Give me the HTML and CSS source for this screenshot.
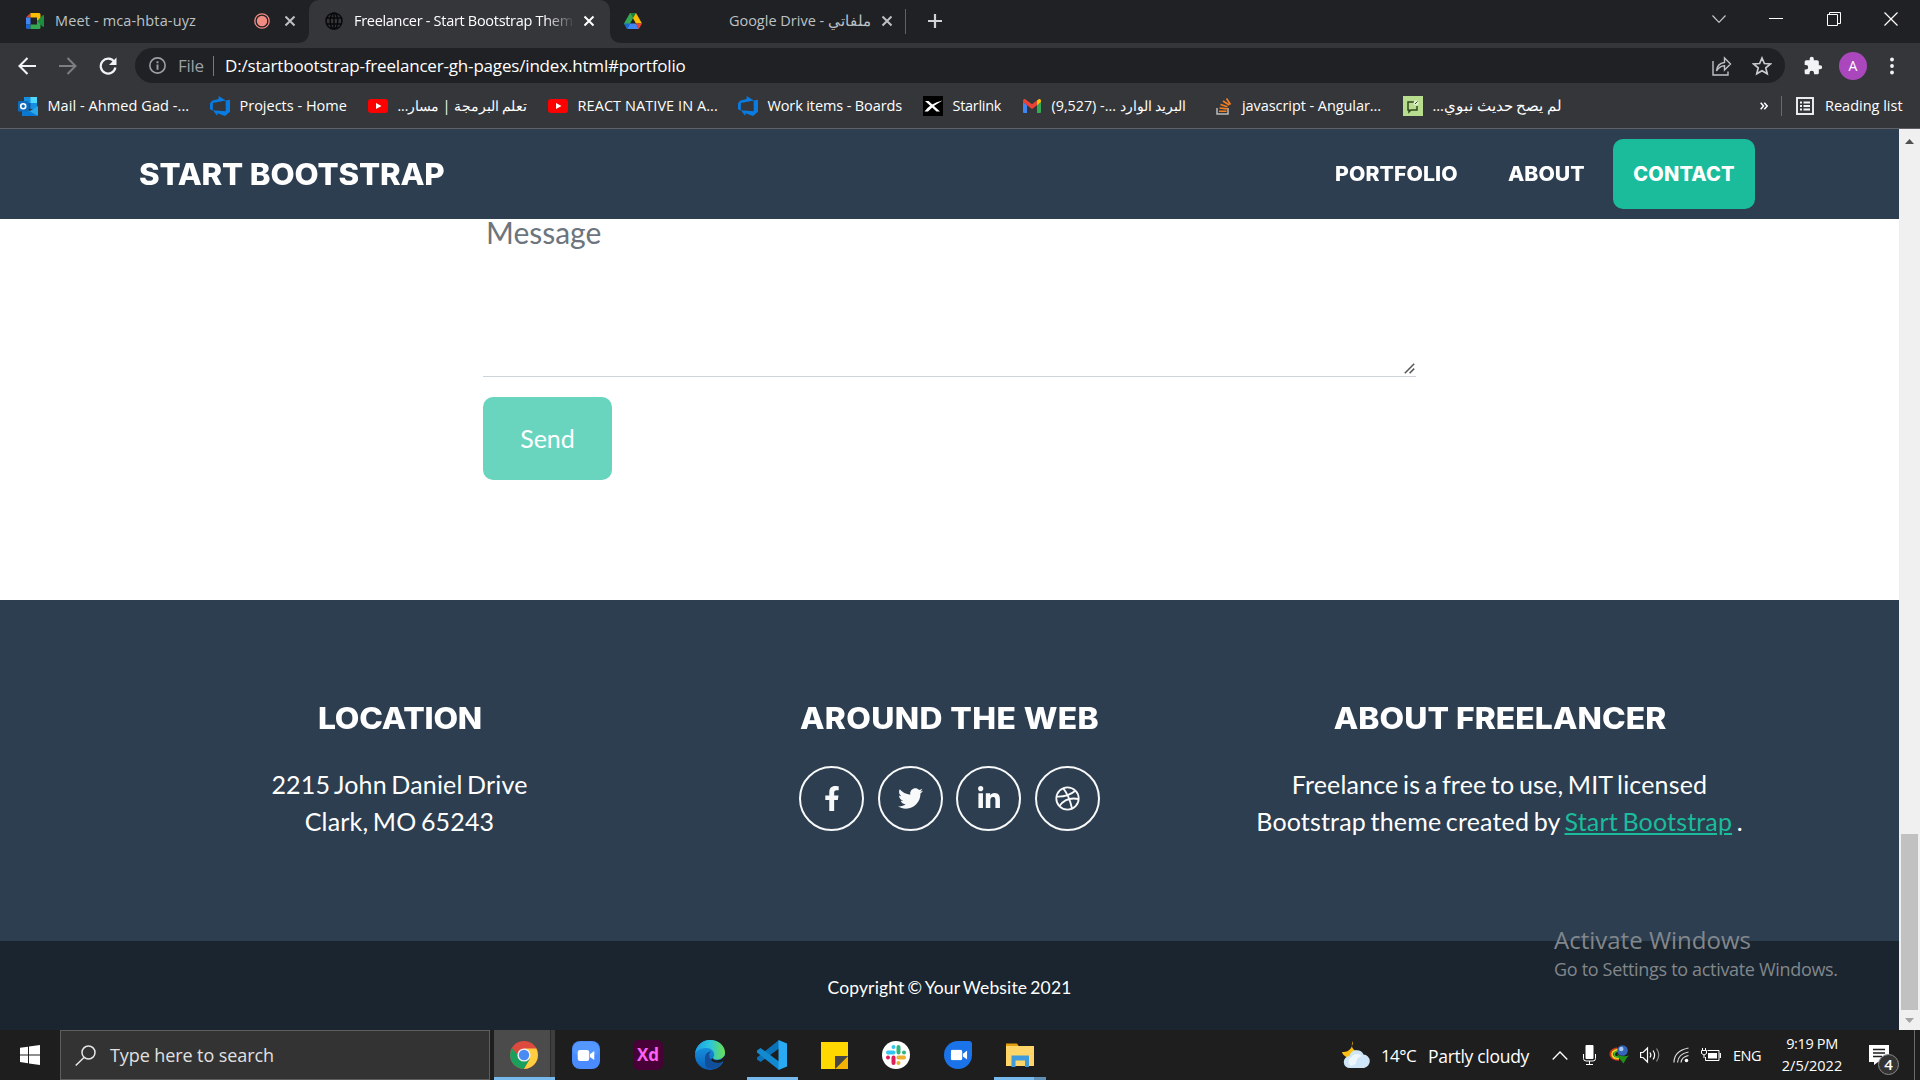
FILE: index.html
```html
<!DOCTYPE html>
<html lang="en">
<head>
<meta charset="utf-8">
<title>Freelancer - Start Bootstrap Theme</title>
<link rel="stylesheet" href="styles.css">
</head>
<body>
<svg width="0" height="0" class="defs">
  <symbol id="close" viewBox="0 0 12 12"><path d="M1.5 1.5l9 9M10.500 1.500l-9 9" stroke="currentColor" stroke-width="2" fill="none"/></symbol>
  <symbol id="youtube" viewBox="0 0 20 20"><rect y="3" width="20" height="14" rx="3" fill="#f00"/><path d="M8 7l5.500 3L8 13z" fill="#fff"/></symbol>
  <symbol id="devops" viewBox="0 0 20 20"><path d="M20 3.700v12l-5 4.300-7.700-2.800V20l-4.400-5.700L15.700 15.300V4.400zM15.800 4.500L8.600 0v2.900L2 4.800 0 7.400v5.800l2.900 1.200V7.100z" fill="#0a7be0"/></symbol>
  <symbol id="camera" viewBox="0 0 18 12"><rect width="12.500" height="12" rx="2.500" fill="#fff"/><path d="M13.300 4.500L18 1v10l-4.700-3.500z" fill="#fff"/></symbol>
</svg>

<header class="browser">
  <div class="tabstrip">
    <div class="tab tab-meet">
      <svg class="favicon" viewBox="0 0 18 16"><path d="M0 4.500L4.500 0v4.500z" fill="#ea4335"/><path d="M4.500 0h8.500q1.500 0 1.500 1.500V6l-3.500 2.500v-4H4.500z" fill="#fbbc04"/><path d="M0 4.500h4.500v7H0z" fill="#4285f4"/><path d="M0 11.500h4.500V16h-3Q0 16 0 14.500z" fill="#1967d2"/><path d="M4.500 11.500H11v-3L14.500 6v8.500q0 1.500-1.500 1.500H4.500z" fill="#34a853"/><path d="M11 8l5.500-5.500Q18 1.500 18 3v10q0 1.500-1.500.5z" fill="#1e8e3e"/></svg>
      <span class="tab-title t-meet">Meet - mca-hbta-uyz</span>
      <svg class="record" viewBox="0 0 16 16"><circle cx="8" cy="8" r="7.200" fill="none" stroke="#f28b82" stroke-width="1.300"/><circle cx="8" cy="8" r="5.200" fill="#f28b82"/></svg>
      <svg class="x"><use href="#close"/></svg>
    </div>
    <div class="tab tab-active">
      <svg class="foot foot-left" viewBox="0 0 12 12"><path d="M12 0v12H0Q12 12 12 0z" fill="#35363a"/></svg>
      <svg class="favicon" viewBox="0 0 18 18" fill="none" stroke="#08090a" stroke-width="1.500"><circle cx="9" cy="9" r="8"/><ellipse cx="9" cy="9" rx="3.800" ry="8"/><path d="M9 1v16M1.500 6h15M1.500 12h15"/></svg>
      <span class="tab-title t-free">Freelancer - Start Bootstrap Them</span>
      <svg class="x"><use href="#close"/></svg>
      <svg class="foot foot-right" viewBox="0 0 12 12"><path d="M0 0v12h12Q0 12 0 0z" fill="#35363a"/></svg>
    </div>
    <div class="tab tab-drive">
      <svg class="favicon" viewBox="0 0 18 16"><path d="M6 0h6l-3 5.300L3.200 16 0 10.500z" fill="#34a853"/><path d="M6 0h6l6 10.500h-6z" fill="#fbbc04"/><path d="M6 0h6L9 5.300z" fill="#188038"/><path d="M6 10.500h6L14.800 16H3.200z" fill="#4285f4"/><path d="M0 10.500h6L3.200 16z" fill="#1967d2"/><path d="M12 10.500h6L14.800 16z" fill="#ea4335"/></svg>
      <span class="tab-title t-drive">Google Drive - <bdi>ملفاتي</bdi></span>
      <svg class="x"><use href="#close"/></svg>
    </div>
    <svg class="newtab" viewBox="0 0 16 16"><path d="M8 1v14M1 8h14" stroke="#d0d2d6" stroke-width="2.200"/></svg>
    <div class="winctl">
      <svg width="14" height="8" viewBox="0 0 14 8"><path d="M.5.500L7 7.300 13.500.5" fill="none" stroke="#c8c8c8" stroke-width="1.200"/></svg>
      <svg width="14" height="2" viewBox="0 0 14 2"><path d="M0 .5h14" stroke="#fff"/></svg>
      <svg width="14" height="14" viewBox="0 0 14 14" fill="none" stroke="#fff"><path d="M.5 2.500h10v11H.5zM2.500 2.500v-2h11v11h-3"/></svg>
      <svg width="14" height="14" viewBox="0 0 14 14"><path d="M.5.500l13 13M13.500.500l-13 13" stroke="#fff" stroke-width="1.200"/></svg>
    </div>
  </div>

  <div class="toolbar">
    <svg class="back" viewBox="0 0 18 18" fill="none" stroke="#f1f3f4" stroke-width="2.100"><path d="M18 9H2M9.500 1L1.500 9l8 8"/></svg>
    <svg class="forward" viewBox="0 0 18 18" fill="none" stroke="#7c7e82" stroke-width="2"><path d="M0 9h16M8.500 1l8 8-8 8"/></svg>
    <svg class="reload" viewBox="0 0 18 18"><path d="M15.300 5A7.400 7.400 0 1 0 16.400 10.500" fill="none" stroke="#f1f3f4" stroke-width="2.200"/><path d="M17.500.5v7.500H10z" fill="#f1f3f4"/></svg>
    <div class="omnibox">
      <svg class="info" viewBox="0 0 16 16"><circle cx="8" cy="8" r="7.200" fill="none" stroke="#9aa0a6" stroke-width="1.500"/><path d="M8 7v5M8 4v1.800" stroke="#9aa0a6" stroke-width="1.800"/></svg>
      <span class="scheme">File</span>
      <span class="url">D:/startbootstrap-freelancer-gh-pages/index.html#portfolio</span>
      <svg class="share" viewBox="0 0 20 20" fill="none" stroke="#bdc1c6" stroke-width="1.400"><path d="M1 5v14h15v-3.500"/><path d="M4.500 15Q5 7.500 12.500 6.500V2l6 6-6 6V9.800Q7.500 10 4.500 15z"/></svg>
      <svg class="star" viewBox="0 0 20 20"><path d="M10 2l2.400 5.500 6 .5-4.600 3.900 1.400 5.900L10 14.700l-5.200 3.100 1.400-5.900L1.600 8l6-.5z" fill="none" stroke="#c8cbd0" stroke-width="1.700"/></svg>
    </div>
    <svg class="puzzle" viewBox="0 0 24 24"><path fill="#f1f3f4" d="M20.500 11H19V7c0-1.100-.9-2-2-2h-4V3.500a2.500 2.500 0 0 0-5 0V5H4c-1.100 0-2 .9-2 2v3.800h1.500a2.700 2.700 0 0 1 0 5.400H2V20c0 1.100.9 2 2 2h3.800v-1.500a2.700 2.700 0 0 1 5.400 0V22H17c1.100 0 2-.9 2-2v-4h1.500a2.500 2.500 0 0 0 0-5z"/></svg>
    <span class="avatar">A</span>
    <svg class="dots" viewBox="0 0 4 18" fill="#f1f3f4"><circle cx="2" cy="2.500" r="1.900"/><circle cx="2" cy="9" r="1.900"/><circle cx="2" cy="15.500" r="1.900"/></svg>
  </div>

  <div class="bookmarks">
    <div class="bm"><svg viewBox="0 0 20 20"><path d="M6 1h13v12H6z" fill="#1490df"/><path d="M12.500 1H19v6h-6.500z" fill="#50d9ff"/><path d="M6 7h6.500v6H6z" fill="#0f5aa8"/><path d="M4 11l8 4 8-5v8.500q0 1.500-1.500 1.500h-13Q4 20 4 18.500z" fill="#28a8ea"/><path d="M4 11l16 9H5.500Q4 20 4 18.500z" fill="#0a78d0"/><rect y="5" width="10.500" height="10.500" rx="1" fill="#0f6cbd"/><circle cx="5.200" cy="10.200" r="2.500" fill="none" stroke="#fff" stroke-width="1.600"/></svg><span class="n-p1">Mail - Ahmed Gad -...</span></div>
    <div class="bm"><svg><use href="#devops"/></svg><span>Projects - Home</span></div>
    <div class="bm"><svg><use href="#youtube"/></svg><span dir="rtl" class="n-4">تعلم البرمجة | مسار...</span></div>
    <div class="bm"><svg><use href="#youtube"/></svg><span class="n-p1">REACT NATIVE IN A...</span></div>
    <div class="bm"><svg><use href="#devops"/></svg><span class="n-2">Work items - Boards</span></div>
    <div class="bm"><svg viewBox="0 0 20 20"><rect width="20" height="20" fill="#000"/><path d="M2 5h3.500L17 15.500h-3.500z" fill="#fff"/><path d="M1.500 15.500Q7 7.500 19.500 4.500 11 9 5 15.500z" fill="#fff"/></svg><span class="n-3">Starlink</span></div>
    <div class="bm"><svg viewBox="0 0 20 20"><path d="M1 6l4 3v8H2q-1 0-1-1z" fill="#4285f4"/><path d="M15 9l4-3v10q0 1-1 1h-3z" fill="#34a853"/><path d="M15 4.500L17 3q2-.5 2 2v1l-4 3.200z" fill="#fbbc04"/><path d="M1 6V5q0-2.500 2-2l7 5.200 5-3.700v4.700l-5 3.900z" fill="#ea4335"/></svg><span class="n-5">(9,527) -... <bdi>البريد الوارد</bdi></span></div>
    <div class="bm bm-so"><svg viewBox="0 0 20 20"><path d="M2 12v6h11v-6" fill="none" stroke="#bcbbbb" stroke-width="1.500"/><path d="M4 15.300h7.500M4.500 12l7.400.9M5.500 8.500l7 2.300M8 5l6.200 4M11.500 2.500l4 6" stroke="#f48024" stroke-width="1.600"/></svg><span class="n-1">javascript - Angular...</span></div>
    <div class="bm"><svg viewBox="0 0 20 20"><rect width="20" height="20" fill="#b9dd8e"/><path d="M11 6H5v8h1v2l2-2h6v-4" fill="none" stroke="#2f4a1c" stroke-width="1.500"/><circle cx="13" cy="7" r="2.500" fill="#fff" opacity=".6"/><path d="M12 8l2.500-2.500" stroke="#2f4a1c"/></svg><span dir="rtl">لم يصح حديث نبوي...</span></div>
    <svg class="more" viewBox="0 0 8 8" fill="none" stroke="#fff" stroke-width="1.500"><path d="M.7.700L3.500 4 .7 7.300M4.300.700L7.200 4 4.300 7.300"/></svg>
    <div class="reading"><svg viewBox="0 0 18 20"><rect x="1" y="2" width="16" height="16" fill="none" stroke="#f1f3f4" stroke-width="1.900"/><path d="M4 6.500h2M7.500 6.500H14M4 10h2M7.500 10H14M4 13.500h2M7.500 13.500H14" stroke="#f1f3f4" stroke-width="1.900"/></svg><span>Reading list</span></div>
  </div>
</header>

<div class="viewport">
  <main class="page">
    <nav class="navbar">
      <a class="brand"><span class="wide">START BOOTSTRAP</span></a>
      <div class="links">
        <a class="link-portfolio"><span class="wide">PORTFOLIO</span></a>
        <a class="link-about"><span class="wide">ABOUT</span></a>
        <a class="link-contact"><span>CONTACT</span></a>
      </div>
    </nav>
    <section class="contact">
      <div class="message">
        <span>Message</span>
        <svg width="11" height="11" viewBox="0 0 11 11"><path d="M.8 10.200l9.400-9.400M5.600 10.200l4.600-4.600" stroke="#555" stroke-width="1.500"/></svg>
      </div>
      <button class="send">Send</button>
    </section>
    <footer class="footer">
      <div class="col">
        <h4><span class="h-loc">LOCATION</span></h4>
        <p><span class="l-addr">2215 John Daniel Drive</span><br><span class="l-addr">Clark, MO 65243</span></p>
      </div>
      <div class="col">
        <h4><span class="h-web">AROUND THE WEB</span></h4>
        <div class="social">
          <a><svg width="16" height="25" viewBox="0 0 320 512"><path d="M279.140 288l14.220-92.660h-88.910v-60.130c0-25.350 12.420-50.060 52.240-50.060h40.420V6.260S260.430 0 225.360 0c-73.220 0-121.080 44.380-121.080 124.720v70.620H22.890V288h81.390v224h100.170V288z"/></svg></a>
          <a><svg width="25" height="25" viewBox="0 0 512 512"><path d="M459.370 151.716c.325 4.548.325 9.097.325 13.645 0 138.720-105.583 298.558-298.558 298.558-59.452 0-114.680-17.219-161.137-47.106 8.447.974 16.568 1.299 25.340 1.299 49.055 0 94.213-16.568 130.274-44.832-46.132-.975-84.792-31.188-98.112-72.772 6.498.974 12.995 1.624 19.818 1.624 9.421 0 18.843-1.300 27.614-3.573-48.081-9.747-84.143-51.980-84.143-102.985v-1.299c13.969 7.797 30.214 12.670 47.431 13.319-28.264-18.843-46.781-51.005-46.781-87.391 0-19.492 5.197-37.360 14.294-52.954 51.655 63.675 129.300 105.258 216.365 109.807-1.624-7.797-2.599-15.918-2.599-24.040 0-57.828 46.782-104.934 104.934-104.934 30.213 0 57.502 12.670 76.670 33.137 23.715-4.548 46.456-13.320 66.599-25.340-7.798 24.366-24.366 44.833-46.132 57.827 21.117-2.273 41.584-8.122 60.426-16.243-14.292 20.791-32.161 39.308-52.628 54.253z"/></svg></a>
          <a><svg width="22" height="25" viewBox="0 0 448 512"><path d="M100.280 448H7.400V148.900h92.880zM53.790 108.100C24.090 108.100 0 83.500 0 53.800a53.790 53.790 0 0 1 107.580 0c0 29.700-24.100 54.300-53.790 54.300zM447.900 448h-92.680V302.400c0-34.700-.7-79.200-48.290-79.200-48.290 0-55.690 37.700-55.690 76.700V448h-92.780V148.900h89.080v40.800h1.300c12.400-23.500 42.690-48.300 87.880-48.300 94 0 111.280 61.900 111.280 142.300V448z"/></svg></a>
          <a><svg width="25" height="25" viewBox="0 0 25 25" class="line"><circle cx="12.500" cy="12.500" r="11.200"/><path d="M8 2.200Q14 9 17 22.500M1.500 10.500Q13 11 20.300 4.700M4.500 20Q11 10.500 23.500 13"/></svg></a>
        </div>
      </div>
      <div class="col">
        <h4><span class="h-free">ABOUT FREELANCER</span></h4>
        <p><span class="l-free">Freelance is a free to use, MIT licensed</span><br><span class="l-addr">Bootstrap theme created by <a class="link">Start Bootstrap</a> .</span></p>
      </div>
    </footer>
    <div class="copyright">Copyright © Your Website 2021</div>
    <div class="activate"><div class="act1">Activate Windows</div><div class="act2">Go to Settings to activate Windows.</div></div>
  </main>
  <div class="scrollbar">
    <svg width="9" height="5" viewBox="0 0 9 5"><path d="M0 5l4.500-5L9 5z" fill="#505050"/></svg>
    <div class="thumb"></div>
    <svg width="9" height="5" viewBox="0 0 9 5"><path d="M0 0l4.500 5L9 0z" fill="#a3a3a3"/></svg>
  </div>
</div>

<div class="taskbar">
  <div class="start"><svg width="20" height="20" viewBox="0 0 20 20" fill="#fff"><path d="M0 2.800L8 1.700v7.700H0zM9 1.500L20 0v9.400H9zM0 10.400h8v7.800l-8-1.100zM9 10.400h11V20L9 18.400z"/></svg></div>
  <div class="search"><svg width="21" height="21" viewBox="0 0 21 21" fill="none" stroke="#e6e6e6" stroke-width="1.500"><circle cx="13.500" cy="7.500" r="6.500"/><path d="M9 12.500L.7 20.500"/></svg><span>Type here to search</span></div>
  <div class="apps">
    <div class="app running current"><svg width="28" height="28" viewBox="0 0 28 28"><circle cx="14" cy="14" r="14" fill="#dd4b3e"/><path d="M1.900 7A14 14 0 0 0 14 28l6.100-10.500L14 14H7.900z" fill="#1a9f5c"/><path d="M26.100 7A14 14 0 0 1 14 28l6.100-10.500L14 7z" fill="#ffcd40"/><path d="M14 7h12.100" stroke="#dd4b3e"/><circle cx="14" cy="14" r="6.600" fill="#f1f1f1"/><circle cx="14" cy="14" r="5.200" fill="#4a8af4"/></svg></div>
    <div class="app"><svg width="28" height="28" viewBox="0 0 28 28"><rect width="28" height="28" rx="8" fill="#4a8cff"/><rect x="1" y="1" width="26" height="14" rx="7" fill="#5da4ff" opacity=".5"/><svg x="5" y="9" width="18" height="11"><use href="#camera"/></svg></svg></div>
    <div class="app"><span class="xd">Xd</span></div>
    <div class="app"><svg width="30" height="30" viewBox="0 0 30 30"><circle cx="15" cy="15" r="15" fill="url(#edgeA)"/><path d="M0 14C1 5 8 0 15 0c9 0 15 6 15 12.500 0 5-4 7-8 7-3 0-4.500-1-3.500-2.500C21 13 17 8 11.500 8 6 8 2 10 0 14z" fill="url(#edgeB)"/><path d="M10 18c0-5 4-7 6.500-6.500-3 1.500-3 5-.5 8 3 3.500 8 3.500 12 1.500C25.500 27 18 30.500 12.500 28 9.500 26 10 22 10 18z" fill="#124f9a"/><path d="M18 18c-1 2 4 3 8 1.500l4-4v7l-2-1c-4 2-10 2-12-2z" fill="#1e1e1e"/><defs><linearGradient id="edgeA" x2="0" y2="1"><stop stop-color="#1aa0e8"/><stop offset="1" stop-color="#0a5fb8"/></linearGradient><linearGradient id="edgeB"><stop stop-color="#1b9de2"/><stop offset=".5" stop-color="#2cc5dc"/><stop offset="1" stop-color="#6be04e"/></linearGradient></defs></svg></div>
    <div class="app running code"><svg width="30" height="30" viewBox="0 0 30 30"><path d="M22 0v8.500L3.500 22 0 19.500v-2z" fill="#0a72b8"/><path d="M22 30v-8.500L3.500 8 0 10.500v2z" fill="#1389d0"/><path d="M21.500 0L30 3.500v23L21.500 30z" fill="#29aaf2"/></svg></div>
    <div class="app"><svg width="27" height="27" viewBox="0 0 27 27"><path d="M0 0h27v14L14 27H0z" fill="#ffd800"/><path d="M27 14v13H14z" fill="#f2b400"/><path d="M14 14h13L14 27z" fill="#464646"/></svg></div>
    <div class="app"><svg width="28" height="28" viewBox="0 0 28 28"><circle cx="14" cy="14" r="14" fill="#fff"/><g stroke-width="4" stroke-linecap="round"><path d="M6 11.500h5.500M11.500 6v0" stroke="#36c5f0"/><path d="M16.500 6v5.500M22 11.500v0" stroke="#2eb67d"/><path d="M16.500 16.500H22M16.500 22v0" stroke="#ecb22e"/><path d="M11.500 16.500V22M6 16.500v0" stroke="#e01e5a"/></g></svg></div>
    <div class="app"><svg width="28" height="28" viewBox="0 0 28 28"><path d="M14 0h11q3 0 3 3v11A14 14 0 1 1 14 0z" fill="#1a73e8"/><svg x="6.500" y="8.500" width="17" height="11"><use href="#camera"/></svg></svg></div>
    <div class="app running multi"><svg width="28" height="26" viewBox="0 0 28 26"><path d="M0 1.500h11l2 3H0z" fill="#e5a00d"/><path d="M0 4h28v20H0z" fill="#ffd667"/><path d="M5.500 13.500h17.500V25h-4v-6.500h-9.500V25h-4z" fill="#3f9bdb"/></svg></div>
  </div>
  <div class="tray">
    <svg class="weather" viewBox="0 0 28 28"><path d="M11 0c-3 5 0 11 7 10-2 5-6 7-9 6-4 1-8-1-9-5 7 1 11-5 11-11z" fill="#fbbf16"/><path d="M8 27a6 6 0 0 1-.5-12 7.500 7.500 0 0 1 14-1.500A6.800 6.800 0 0 1 22 27z" fill="#cfe6f8"/><path d="M9 25a5 5 0 0 1 0-8.500 7 7 0 0 1 11-1.500 8 8 0 0 0-6 8z" fill="#eef7fd"/></svg>
    <span class="temp">14°C</span><span class="cond">Partly cloudy</span>
    <svg class="chev" viewBox="0 0 16 9"><path d="M.7 8.500L8 1l7.300 7.500" fill="none" stroke="#fff" stroke-width="1.300"/></svg>
    <svg class="mic" viewBox="0 0 13 20"><rect x="2.500" width="8" height="14" rx="1" fill="#fff"/><path d="M.5 9v4.500q0 2.500 2.500 2.500h7q2.500 0 2.500-2.500V9M6.500 16v3.500M3 19.500h7" fill="none" stroke="#fff"/></svg>
    <svg class="idm" viewBox="0 0 20 19"><path d="M8 3Q0 5 1.500 10.500 3 15 10 15" fill="none" stroke="#c8351c" stroke-width="1.600"/><path d="M9 4.500Q2 6 3.200 10.500 5 14 10 13.500" fill="none" stroke="#f4d01e" stroke-width="1.800"/><path d="M9 6Q4.500 7 5.300 10.500 7 12.500 10 12" fill="none" stroke="#3fb53a" stroke-width="1.600"/><circle cx="13.500" cy="5.500" r="5.300" fill="#3565b8"/><circle cx="12.300" cy="4" r="2.200" fill="#a9c8f0"/><path d="M8 9q5 3.500 12 1.500L18 12.500 14.500 18.500 10 13z" fill="#1f8f1a"/></svg>
    <svg class="vol" viewBox="0 0 20 18" fill="none" stroke="#fff" stroke-width="1.200"><path d="M.6 6.500H3L7.500 2v14L3 11.500H.6z"/><path d="M10 6.500q1.700 2.500 0 5M13 4.500q3.200 4.500 0 9"/><path d="M16.500 2.500q4.500 6.500 0 13" opacity=".5"/></svg>
    <svg class="wifi" viewBox="0 0 16 16" fill="none" stroke="#ddd" stroke-width="1.200"><path d="M1 15.500Q1 4 15.500 1M4.500 15.500Q5 7 15.500 5M8 15.500Q8.500 10 15.500 8.500"/><circle cx="13.500" cy="13.500" r="1.800" fill="#fff" stroke="none"/></svg>
    <svg class="bat" viewBox="0 0 20 14" fill="none" stroke="#fff"><path d="M6.500 2.500h11.500v10H4.500V9"/><path d="M7 5h9v5.500H7z" fill="#fff" stroke="none"/><path d="M19.300 5v5" stroke-width="1.300"/><path d="M.5 2.500h5v3q-2.500 3-5 0zM1.500 2.500V0M4.500 2.500V0M3 7v3"/></svg>
    <span class="eng">ENG</span>
    <div class="clock"><span class="time">9:19 PM</span><span>2/5/2022</span></div>
    <div class="notif"><svg width="20" height="20" viewBox="0 0 20 20"><path d="M0 0h20v17H9l-4 3v-3H0z" fill="#fff"/><path d="M4 4.500h12M4 8h12M4 11.500h9" stroke="#1e1e1e" stroke-width="1.300"/></svg><span class="badge">4</span></div>
    <div class="peek"></div>
  </div>
</div>
</body>
</html>
```
FILE: styles.css
```css
* { box-sizing: border-box; }
body { margin: 0; width: 1920px; height: 1080px; overflow: hidden; display: flex; flex-direction: column; font-family: "Open Sans", "Noto Sans", sans-serif; background: #fff; }
svg { display: block; flex: none; }
.defs { display: none; }
span { white-space: nowrap; }

/* browser chrome */
.browser { height: 129px; flex: none; background: #35363a; border-bottom: 1px solid #606167; color: #fff; font-size: 14.500px; }
.tabstrip { display: flex; height: 43px; background: #202124; }
.tab { display: flex; align-items: center; height: 43px; color: #bdc1c6; position: relative; padding-bottom: 1px; }
.favicon { width: 18px; height: 18px; }
.tab-title { line-height: 20px; flex: none; }
.x { width: 12px; height: 12px; }
.tab-meet { width: 309px; padding-left: 26px; }
.t-meet { margin-left: 11px; width: 199px; letter-spacing: .14px; }
.record { width: 16px; height: 16px; }
.tab-meet .x { margin-left: 14px; }
.tab-active { width: 301px; background: #35363a; border-radius: 10px 10px 0 0; padding-left: 16px; color: #fff; }
.t-free { margin-left: 11px; width: 220px; overflow: hidden; letter-spacing: -.3px; -webkit-mask-image: linear-gradient(90deg, #000 190px, transparent 221px); mask-image: linear-gradient(90deg, #000 190px, transparent 221px); }
.tab-active .x { margin-left: 9px; }
.foot { position: absolute; bottom: 0; width: 12px; height: 12px; }
.foot-left { left: -12px; }
.foot-right { right: -12px; }
.tab-drive { width: 297px; padding-left: 14px; }
.t-drive { width: 229px; text-align: right; margin-right: 10px; }
.tab-drive::after { content: ""; width: 1px; height: 25px; background: #5f6165; margin-left: 12px; }
.newtab { width: 16px; height: 16px; margin: 13px 0 0 20px; }
.winctl { display: flex; align-items: center; gap: 43.500px; margin: 0 22px 5px auto; }

.toolbar { display: flex; align-items: center; height: 45px; padding: 0 26px 0 18px; }
.back, .forward, .reload { width: 18px; height: 18px; }
.forward { margin-left: 23px; }
.reload { margin-left: 22px; }
.omnibox { display: flex; align-items: center; width: 1650px; height: 35px; margin-left: 18px; padding: 0 13px 0 14px; border-radius: 18px; background: #202124; font-size: 17px; }
.info { width: 17px; height: 17px; }
.scheme { width: 36px; margin-left: 12px; color: #9aa0a6; letter-spacing: -.3px; border-right: 1px solid #777a7e; line-height: 20px; }
.url { margin-left: 11px; letter-spacing: -.18px; line-height: 20px; }
.share { width: 20px; height: 20px; margin-left: auto; }
.star { width: 20px; height: 20px; margin-left: 20px; }
.puzzle { width: 20px; height: 20px; margin-left: 18px; }
.avatar { width: 28px; height: 28px; border-radius: 50%; margin-left: 16px; background: #ab47bc; text-align: center; line-height: 28px; font-size: 14px; }
.dots { width: 4px; height: 20px; margin-left: 23px; }

.bookmarks { display: grid; grid-template-columns: 192px 158px 180px 190px 185px 99px 194px 187px 357px 22px 1fr; height: 40px; padding: 0 0 5px 18px; align-items: center; }
.bm, .reading { display: flex; align-items: center; gap: 9.500px; line-height: 20px; }
.bm svg { width: 20px; height: 20px; }
.bm-so { gap: 7px; margin-left: -1px; }
.n-p1 { letter-spacing: .07px; }
.n-1 { letter-spacing: -.07px; }
.n-2 { letter-spacing: -.12px; }
.n-3 { letter-spacing: -.28px; }
.n-4 { font-size: 13.700px; }
.n-5 { font-size: 14.300px; }
.more { width: 8px; height: 8px; }
.reading { border-left: 1px solid #6a6b6f; padding-left: 14px; margin-left: -1px; gap: 11px; }
.reading svg { width: 18px; height: 20px; }

/* web page */
.viewport { display: flex; height: 901px; flex: none; }
.page { position: relative; width: 1899px; font-family: Lato, sans-serif; }
.navbar { display: flex; align-items: center; justify-content: space-between; height: 90px; padding: 0 144px 0 139px; background: #2c3e50; color: #fff; font: 800 20px Inter, sans-serif; }
.brand { font-size: 29.500px; }
.wide { display: inline-block; transform: scaleX(1.060); transform-origin: left; }
.brand .wide { letter-spacing: -.15px; }
.links { display: flex; align-items: center; }
.link-portfolio { width: 173px; }
.link-portfolio .wide { letter-spacing: .1px; }
.link-about { width: 105px; }
.link-contact { width: 142px; height: 70px; line-height: 70px; text-align: center; border-radius: 10px; background: #1abc9c; letter-spacing: .15px; }
.contact { height: 381px; padding-left: 483px; }
.message { display: flex; justify-content: space-between; align-items: flex-end; width: 933px; height: 158px; border-bottom: 1px solid #ced4da; color: #6c757d; font-size: 30px; line-height: 40px; padding: 0 1px 2px 3px; }
.message span { align-self: flex-start; margin-top: -7px; }
.send { display: block; width: 129px; height: 83px; margin-top: 20px; padding: 0 0 2px; border: 0; border-radius: 10px; background: #6ad5bf; color: #fff; font: 25px Lato, sans-serif; }
.footer { display: grid; grid-template-columns: 550px 550px 550px; justify-content: center; height: 341px; padding-top: 96px; background: #2c3e50; color: #fff; text-align: center; }
h4 { margin: 0; height: 44px; font: 800 29.500px/44px Inter, sans-serif; }
h4 span { display: inline-block; transform: scaleX(1.080); }
.h-loc { letter-spacing: -.2px; }
.h-web { letter-spacing: .35px; }
.h-free { letter-spacing: .05px; }
.col p { margin: 26px 0 0; font-size: 25px; line-height: 37px; }
.l-addr { letter-spacing: .17px; word-spacing: -2px; }
.l-free { letter-spacing: .17px; word-spacing: -2px; }
.link { color: #1abc9c; text-decoration: underline; }
.social { display: flex; justify-content: center; gap: 13.600px; margin-top: 26px; }
.social a { display: flex; align-items: center; justify-content: center; width: 65px; height: 65px; border: 2px solid #f8f9fa; border-radius: 50%; }
.social svg { fill: #f8f9fa; }
.social .line { fill: none; stroke: #f8f9fa; stroke-width: 1.800; }
.copyright { height: 89px; background: #1a252f; color: #fff; text-align: center; font-size: 17.500px; line-height: 93px; letter-spacing: .14px; word-spacing: -1.500px; }
.activate { position: absolute; left: 1554px; top: 793px; color: #82878c; font-family: "Open Sans", sans-serif; white-space: nowrap; }
.act1 { font-size: 24px; line-height: 36px; }
.act2 { font-size: 18px; line-height: 22px; letter-spacing: -.32px; }
.scrollbar { width: 21px; background: #f0f0f0; display: flex; flex-direction: column; align-items: center; padding: 10px 0 7px; }
.thumb { width: 17px; height: 176px; margin: auto 0 8px; background: #c1c1c1; }

/* taskbar */
.taskbar { display: flex; height: 50px; flex: none; background: #1e1e1e; color: #fff; }
.start { width: 60px; display: flex; align-items: center; padding-left: 20px; }
.search { display: flex; align-items: center; width: 430px; height: 50px; padding-left: 14px; border: 1px solid #5e5e5e; background: #333; color: #e0e0e0; font-size: 18px; letter-spacing: -.09px; }
.search span { margin-left: 14px; line-height: 24px; }
.apps { display: flex; margin-left: 3px; }
.app { display: flex; align-items: center; justify-content: center; width: 62px; height: 50px; position: relative; }
.running::after { content: ""; position: absolute; bottom: 0; left: 5px; width: 52px; height: 3px; background: #76b9ed; }
.current { background: linear-gradient(90deg, transparent 1px, #4b4b4b 1px, #4b4b4b 57px, #2b2b2b 57px, #2b2b2b 58px, #3e3e3e 58px); }
.current::after { left: 1px; width: 61px; }
.code::after { left: 6px; width: 51px; }
.multi::after { background: linear-gradient(90deg, #76b9ed 40px, #5f91b8 40px); }
.xd { width: 30px; height: 30px; border-radius: 6px; background: #470137; color: #ff61f6; font-size: 17px; font-weight: 700; line-height: 29px; text-align: center; }
.tray { display: flex; align-items: center; margin-left: auto; width: 578px; font-size: 18px; line-height: 24px; }
.weather { width: 28px; height: 28px; }
.temp { width: 47px; margin: 2px 0 0 11px; font-size: 17px; letter-spacing: -.6px; }
.cond { width: 124px; margin-top: 2px; font-size: 17.500px; letter-spacing: -.3px; }
.chev { width: 16px; height: 9px; }
.mic { width: 13px; height: 20px; margin-left: 15px; }
.idm { width: 20px; height: 19px; margin: -2px 0 0 13px; }
.vol { width: 20px; height: 18px; margin-left: 11px; }
.wifi { width: 16px; height: 16px; margin-left: 13px; }
.bat { width: 20px; height: 14px; margin-left: 12px; }
.eng { width: 46px; margin: 1px 0 0 12px; font-size: 14.500px; letter-spacing: -.5px; }
.clock { display: flex; flex-direction: column; align-items: center; width: 66px; font-size: 14.500px; line-height: 22.500px; }
.time { letter-spacing: -.37px; }
.notif { position: relative; margin-left: 24px; width: 45px; height: 20px; }
.badge { position: absolute; left: 9px; top: 9px; width: 21px; height: 21px; border: 1px solid #8a8a8a; border-radius: 50%; background: #333; font-size: 15px; font-weight: 600; line-height: 19px; text-align: center; }
.peek { width: 1px; height: 50px; background: #6a6a6a; }
```
